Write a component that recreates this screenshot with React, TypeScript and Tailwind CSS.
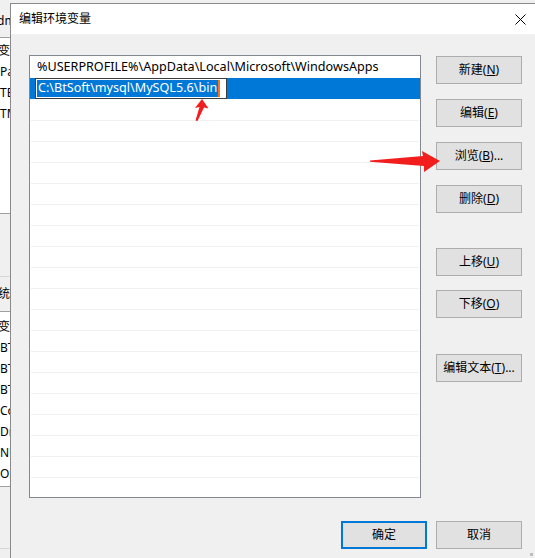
import React from "react";

const F = { fontFamily: '"Noto Sans", "Noto Sans CJK SC", sans-serif' };

function Btn({ label, k, suffix = "", primary = false }: { label: string; k?: string; suffix?: string; primary?: boolean }) {
  return (
    <div
      className={`w-[86px] h-[28px] flex items-center justify-center bg-[#e1e1e1] text-[12px] text-black ${
        primary ? "border-2 border-[#0078d7]" : "border border-[#adadad]"
      }`}
    >
      <span>
        {label}
        {k !== undefined && (
          <>
            (<span className="underline">{k}</span>){suffix}
          </>
        )}
      </span>
    </div>
  );
}

const rows = Array.from({ length: 21 });

export default function App() {
  return (
    <div className="relative w-[535px] h-[558px] overflow-hidden bg-[#f0f0f0] flex" style={F}>
      {/* background window fragment */}
      <div className="w-[10px] shrink-0 flex flex-col text-[12px] text-black overflow-hidden">
        <div className="h-[38px] shrink-0 flex items-center pt-[4px] border-b border-[#a0a0a0]">
          <span className="-ml-[3px] whitespace-nowrap">dm</span>
        </div>
        <div className="h-[176px] shrink-0 bg-white border-b border-[#a0a0a0] flex flex-col leading-[21px] pt-[2px]">
          <span className="-ml-[2px] whitespace-nowrap">变</span>
          <span className="whitespace-nowrap">Pa</span>
          <span className="whitespace-nowrap">TE</span>
          <span className="whitespace-nowrap">TM</span>
        </div>
        <div className="h-[63px] shrink-0 border-b border-[#d8d8d8]" />
        <div className="h-[35px] shrink-0 flex items-center border-b border-[#a0a0a0]">
          <span className="-ml-[2px] whitespace-nowrap">统</span>
        </div>
        <div className="h-[175px] shrink-0 bg-white border-b border-[#a0a0a0] flex flex-col leading-[21px] pt-[4px]">
          <span className="-ml-[2px] whitespace-nowrap">变</span>
          <span className="whitespace-nowrap">BT</span>
          <span className="whitespace-nowrap">BT</span>
          <span className="whitespace-nowrap">BT</span>
          <span className="whitespace-nowrap">Co</span>
          <span className="whitespace-nowrap">Dr</span>
          <span className="whitespace-nowrap">NU</span>
          <span className="whitespace-nowrap">OS</span>
        </div>
        <div className="h-[62px] shrink-0 border-b border-[#d8d8d8]" />
      </div>

      {/* dialog */}
      <div className="flex-1 mt-[3px] border-l border-t border-[#8a8a8a] flex flex-col bg-[#f0f0f0]">
        <div className="h-[30px] bg-white flex items-center justify-between pl-[8px] pr-[9px] text-[12px] text-black">
          <span>编辑环境变量</span>
          <svg width="11" height="11" viewBox="0 0 11 11">
            <path d="M0.5 0.5 L10.5 10.5 M10.5 0.5 L0.5 10.5" stroke="#000" strokeWidth="1" />
          </svg>
        </div>
        <div className="flex-1 pl-[18px] pt-[21px] flex flex-col">
          <div className="flex">
            <div className="w-[392px] h-[443px] border border-[#828790] bg-white overflow-hidden pt-[1px] text-[12.6px] text-black">
              {rows.map((_, i) => {
                if (i === 0)
                  return (
                    <div key={i} className="h-[21px] flex items-center pl-[7px] whitespace-nowrap">
                      %USERPROFILE%\AppData\Local\Microsoft\WindowsApps
                    </div>
                  );
                if (i === 1)
                  return (
                    <div key={i} className="h-[21px] bg-[#0078d7] flex items-center pl-[5px]">
                      <div className="w-[192px] h-[21px] bg-white border border-[#3c3c3c] flex items-center pl-[1px]">
                        <span className="bg-[#0078d7] text-white h-[17px] flex items-center pl-[1px] pr-[1px] whitespace-nowrap">
                          C:\BtSoft\mysql\MySQL5.6\bin
                        </span>
                        <span className="w-[2px] h-[17px] bg-[#f07820]" />
                      </div>
                    </div>
                  );
                return (
                  <div
                    key={i}
                    className={`h-[21px] mx-[1px] ${i >= 3 ? "border-t border-[#f0f0f0]" : ""}`}
                  />
                );
              })}
            </div>
            <div className="ml-[15px] pt-[1px] flex flex-col">
              <Btn label="新建" k="N" />
              <div className="mt-[15px]">
                <Btn label="编辑" k="E" />
              </div>
              <div className="mt-[15px]">
                <Btn label="浏览" k="B" suffix="..." />
              </div>
              <div className="mt-[15px]">
                <Btn label="删除" k="D" />
              </div>
              <div className="mt-[35px]">
                <Btn label="上移" k="U" />
              </div>
              <div className="mt-[14px]">
                <Btn label="下移" k="O" />
              </div>
              <div className="mt-[36px]">
                <Btn label="编辑文本" k="T" suffix="..." />
              </div>
            </div>
          </div>
          <div className="w-[493px] flex justify-end gap-[9px] mt-[23px]">
            <Btn label="确定" primary />
            <Btn label="取消" />
          </div>
        </div>
      </div>

      {/* size grip */}
      <div className="absolute right-[2px] bottom-[2px] w-[3px] h-[3px] bg-[#bdbdbd]" />

      {/* annotation arrows */}
      <svg className="absolute left-0 top-0 pointer-events-none" width="535" height="558" viewBox="0 0 535 558">
        <polygon points="202,99 208.5,108.5 204,107.5 197.5,121 195.5,120.5 199.5,107 195,108" fill="#f21d1d" />
        <polygon points="370,160.5 423,156 422,151 440,161 424,172 424,166 370,161.8" fill="#f21d1d" />
      </svg>
    </div>
  );
}
